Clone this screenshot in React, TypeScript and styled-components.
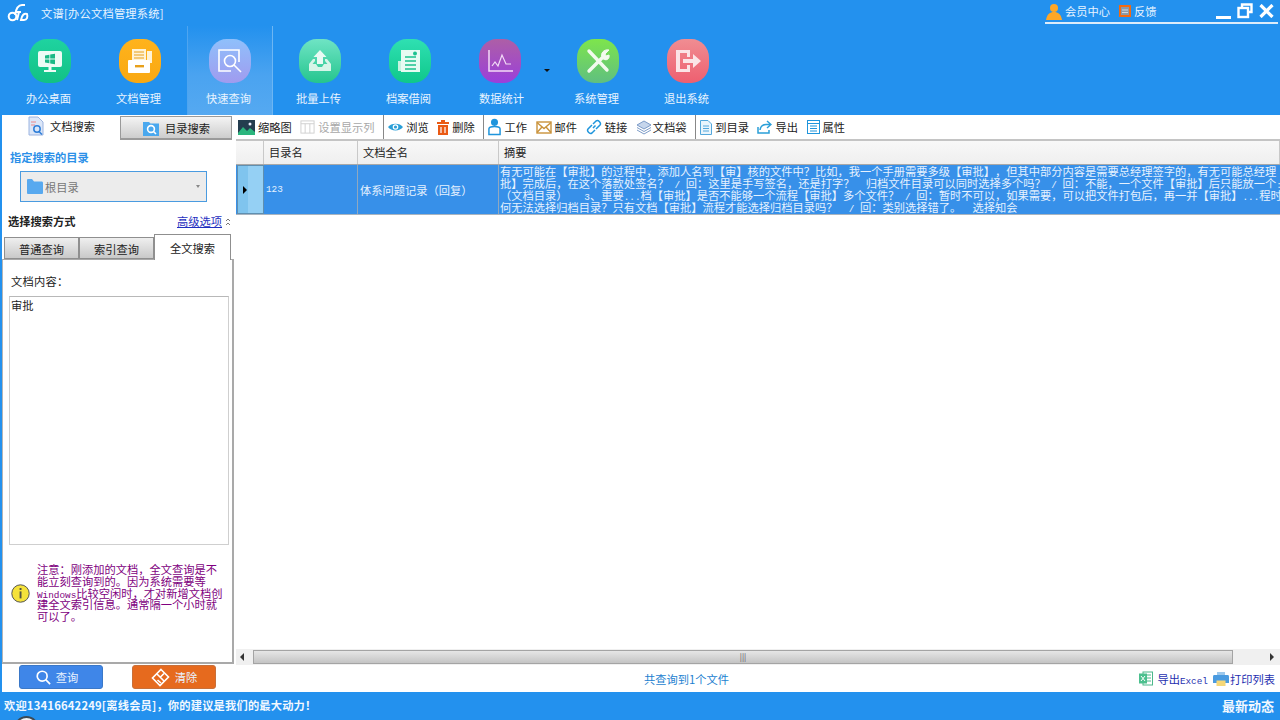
import React from "react";
import styled, { createGlobalStyle } from "styled-components";

const CJK = `"Noto Sans CJK SC", "Noto Sans", sans-serif`;
const MONO = `"Liberation Mono", "Noto Sans CJK SC", monospace`;
const BLUE = "#2391ee";

const GlobalStyle = createGlobalStyle`
  html, body { margin: 0; padding: 0; background: ${BLUE}; }
  * { box-sizing: border-box; text-spacing-trim: space-all; }
`;

const Page = styled.div`
  position: relative;
  width: 1280px;
  height: 720px;
  overflow: hidden;
  background: ${BLUE};
  font-family: ${CJK};
  font-size: 11.25px;
  color: #222;
  display: flex;
  flex-direction: column;
`;

// half-width runs, the .6em mono advance at this size is exactly half a CJK cell
const Half = styled.span`
  font-family: ${MONO};
  font-size: 9.375px;
  line-height: 0;
  white-space: pre;
`;

/* ---------- title bar ---------- */
const TitleBar = styled.div`
  height: 26px;
  flex: none;
  display: flex;
  align-items: flex-start;
  justify-content: space-between;
  padding-left: 7px;
`;

const Brand = styled.div`
  display: flex;
  align-items: center;
  gap: 12px;
  height: 26px;
  color: #e8f4ff;
  letter-spacing: 0.02em;
`;

const UserBox = styled.div`
  width: 233px;
  height: 24px;
  margin-right: 2px;
  border-bottom: 2px solid #dcecfa;
  display: flex;
  align-items: center;
  padding-left: 1px;
  color: #e8f4ff;
`;

const UserLink = styled.span`
  display: flex;
  align-items: center;
  gap: 3px;
  margin-right: 9px;
`;

const WindowButtons = styled.div`
  margin-left: auto;
  display: flex;
  align-items: center;
  gap: 6px;
  margin-right: 4px;
`;

/* ---------- ribbon ---------- */
const Ribbon = styled.div`
  height: 89px;
  flex: none;
  display: flex;
  padding-left: 5px;
`;

const RibbonItem = styled.div<{ $active?: boolean }>`
  width: ${(p) => (p.$active ? "86px" : "90px")};
  margin: ${(p) => (p.$active ? "0 2px" : "0")};
  display: flex;
  flex-direction: column;
  align-items: center;
  padding-top: 13px;
  color: #e9f4ff;
  font-size: 11.25px;
  background: ${(p) =>
    p.$active ? "linear-gradient(180deg, #2391ee 0%, #4aa3f0 55%, #55a9f1 100%)" : "transparent"};
  border-left: ${(p) => (p.$active ? "1px solid #4ea5f0" : "1px solid transparent")};
  border-right: ${(p) => (p.$active ? "1px solid #6db6f3" : "1px solid transparent")};
`;

const RibbonIcon = styled.div<{ $from: string; $to: string }>`
  width: 42px;
  height: 44px;
  border-radius: 42%;
  background: linear-gradient(180deg, ${(p) => p.$from}, ${(p) => p.$to});
  display: flex;
  align-items: center;
  justify-content: center;
`;

const RibbonLabel = styled.span<{ $nudge?: boolean }>`
  margin-top: 7px;
  padding: ${(p) => (p.$nudge ? "0 0 0 3px" : "0 3px 0 0")};
  line-height: 16px;
`;

const DropArrow = styled.div`
  width: 9px;
  flex: none;
  padding-top: 43px;
  margin-left: -1px;
  &::after {
    content: "";
    display: block;
    width: 0;
    height: 0;
    border-left: 3px solid transparent;
    border-right: 3px solid transparent;
    border-top: 3px solid #111;
  }
`;

/* ---------- main area ---------- */
const Main = styled.div`
  flex: 1;
  min-height: 0;
  display: flex;
  background: #fff;
`;

const LeftColumn = styled.div`
  width: 236px;
  flex: none;
  display: flex;
  flex-direction: column;
  border-left: 2px solid ${BLUE};
`;

const TopTabs = styled.div`
  height: 25px;
  flex: none;
  display: flex;
`;

const TopTab = styled.div<{ $active?: boolean }>`
  width: ${(p) => (p.$active ? "118px" : "112px")};
  height: ${(p) => (p.$active ? "25px" : "24px")};
  margin-top: ${(p) => (p.$active ? "0" : "1px")};
  display: flex;
  align-items: center;
  gap: 6px;
  padding-left: ${(p) => (p.$active ? "26px" : "22px")};
  padding-bottom: ${(p) => (p.$active ? "3px" : "0")};
  color: #1c1c1c;
  background: ${(p) => (p.$active ? "#fff" : "linear-gradient(180deg, #f4f4f4, #cdcdcd)")};
  border: ${(p) => (p.$active ? "none" : "1px solid #9a9a9a")};
  border-bottom-width: ${(p) => (p.$active ? "0" : "2px")};
`;

const LeftBody = styled.div`
  flex: 1;
  min-height: 0;
  display: flex;
  flex-direction: column;
  margin-right: 2px;
`;

const SectionTitle = styled.div`
  margin: 9px 0 0 8px;
  line-height: 16px;
  font-weight: 700;
  color: #2b90e8;
`;

const DirSelect = styled.div`
  width: 187px;
  height: 31px;
  margin: 6px 0 0 18px;
  border: 1px solid #4a9be0;
  background: #ececec;
  display: flex;
  align-items: center;
  padding: 0 6px;
  gap: 2px;
  color: #777;
`;

const SelectArrow = styled.span`
  margin-left: auto;
  width: 0;
  height: 0;
  border-left: 2.5px solid transparent;
  border-right: 2.5px solid transparent;
  border-top: 3px solid #888;
`;

const ModeRow = styled.div`
  display: flex;
  align-items: center;
  justify-content: space-between;
  margin: 11px 3px 0 6px;
  height: 16px;
`;

const ModeTitle = styled.span`
  font-weight: 700;
  color: #222;
`;

const AdvancedLink = styled.span`
  color: #1f2fc0;
  display: flex;
  align-items: center;
  gap: 3px;
`;

const AdvancedText = styled.span`
  text-decoration: underline;
`;

const InnerTabs = styled.div`
  height: 27px;
  margin-top: 3px;
  display: flex;
  align-items: flex-end;
  padding-left: 2px;
`;

const InnerTab = styled.div<{ $active?: boolean }>`
  width: ${(p) => (p.$active ? "77px" : "75px")};
  height: ${(p) => (p.$active ? "26px" : "22px")};
  margin-bottom: ${(p) => (p.$active ? "-1px" : "0")};
  padding-top: ${(p) => (p.$active ? "0" : "2px")};
  display: flex;
  align-items: center;
  justify-content: center;
  position: relative;
  z-index: ${(p) => (p.$active ? 1 : 0)};
  background: ${(p) => (p.$active ? "#fff" : "linear-gradient(180deg, #efefef, #c9c9c9)")};
  border: 1px solid #8f8f8f;
  border-bottom: ${(p) => (p.$active ? "none" : "1px solid #8f8f8f")};
`;

const TabPanel = styled.div`
  height: 405px;
  flex: none;
  border: 1px solid #a9a9a9;
  border-width: 1px 2px 2px 1px;
  border-left-color: #b5b5b5;
  display: flex;
  flex-direction: column;
  background: #fff;
`;

const FieldLabel = styled.div`
  margin: 13px 0 0 8px;
  line-height: 16px;
  letter-spacing: 0.02em;
`;

const ContentBox = styled.div`
  width: 220px;
  height: 249px;
  margin: 7px 0 0 6px;
  border: 1px solid #cfcfcf;
  border-top-color: #b8b8b8;
  padding: 1px 1px;
  line-height: 14px;
`;

const NoteRow = styled.div`
  display: flex;
  align-items: center;
  margin: 19px 0 0 8px;
  gap: 7px;
`;

const NoteText = styled.div`
  width: 186px;
  line-height: 11.8px;
  color: #800080;
`;

const ActionBar = styled.div`
  flex: 1;
  display: flex;
  gap: 29px;
  padding: 1px 0 0 17px;
`;

const ActionButton = styled.div<{ $orange?: boolean }>`
  width: 84px;
  height: 24px;
  border-radius: 3px;
  display: flex;
  align-items: center;
  justify-content: center;
  gap: 5px;
  padding-right: ${(p) => (p.$orange ? "0" : "8px")};
  color: #e8f2ff;
  background: ${(p) => (p.$orange ? "#e66a1e" : "#3f86e8")};
  border: 1px solid ${(p) => (p.$orange ? "#c8703a" : "#3a78c8")};
`;

/* ---------- right side ---------- */
const RightColumn = styled.div`
  flex: 1;
  min-width: 0;
  display: flex;
  flex-direction: column;
`;

const Toolbar = styled.div`
  height: 26px;
  flex: none;
  padding: 0 0 1px 2px;
  display: flex;
  align-items: center;
  border-bottom: 2px solid #c4c4c4;
  border-top: 1px solid #fff;
`;

const ToolItem = styled.div<{ $disabled?: boolean; $gap?: number }>`
  display: flex;
  align-items: center;
  gap: ${(p) => p.$gap ?? 3}px;
  margin-right: 8.6px;
  color: ${(p) => (p.$disabled ? "#a8a8a8" : "#222")};
  white-space: nowrap;
`;

const ToolSep = styled.span`
  width: 1px;
  height: 24px;
  margin: 0 4px 0 0;
  background: #888;
`;

const GridHeader = styled.div`
  height: 24px;
  flex: none;
  display: flex;
  background: linear-gradient(180deg, #f8f8f8, #efefef);
  border-bottom: 1px solid #a8a8a8;
`;

const HeadCell = styled.div<{ $w?: number }>`
  width: ${(p) => (p.$w ? `${p.$w}px` : "auto")};
  flex: ${(p) => (p.$w ? "none" : "1")};
  padding-left: 5px;
  line-height: 22px;
  border-right: 1px solid #c9c9c9;
  color: #222;
`;

const DataRow = styled.div`
  height: 50px;
  flex: none;
  display: flex;
  background: #3790e9;
  border-bottom: 1px solid #a8b4c0;
  color: #e6f2ff;
`;

const RowHandle = styled.div`
  width: 27px;
  margin-left: 1px;
  flex: none;
  display: flex;
  align-items: center;
  padding-left: 5px;
  background: linear-gradient(90deg, #7fc4ee 0 40%, #95d0f4 40% 100%);
  border: 1px solid #5f8fb0;
  &::before {
    content: "";
    width: 0;
    height: 0;
    border-top: 4px solid transparent;
    border-bottom: 4px solid transparent;
    border-left: 4px solid #000;
  }
`;

const RowCell = styled.div<{ $w: number }>`
  width: ${(p) => p.$w}px;
  flex: none;
  display: flex;
  align-items: center;
  padding-left: 2px;
  border-right: 1px solid #8fa8c0;
`;

const SummaryCell = styled.div`
  flex: 1;
  min-width: 0;
  overflow: hidden;
  padding: 1px 0 0 1px;
`;

const SummaryLine = styled.div`
  line-height: 11.9px;
  white-space: pre;
`;

const GridBody = styled.div`
  flex: 1;
  min-height: 0;
  background: #fff;
`;

const HScrollBar = styled.div`
  height: 16px;
  flex: none;
  display: flex;
  align-items: center;
  background: #f0f0f0;
  padding: 0 6px 0 4px;
`;

const ScrollArrow = styled.span<{ $right?: boolean }>`
  width: 0;
  height: 0;
  flex: none;
  border-top: 4px solid transparent;
  border-bottom: 4px solid transparent;
  ${(p) => (p.$right ? "border-left: 4px solid #333;" : "border-right: 4px solid #333;")}
`;

const ScrollThumb = styled.div`
  width: 980px;
  height: 14px;
  margin: 0 auto 0 9px;
  background: linear-gradient(180deg, #e6e6e6, #c4c4c4);
  border: 1px solid #a4a4a4;
  display: flex;
  align-items: center;
  justify-content: center;
  color: #555;
  font-size: 8px;
  line-height: 1;
`;

const FooterBar = styled.div`
  height: 27px;
  flex: none;
  display: flex;
  align-items: center;
  padding-right: 5px;
`;

const ResultCount = styled.span`
  margin-left: 408px;
  color: #1d7fd0;
`;

const FooterLinks = styled.div`
  margin-left: auto;
  display: flex;
  align-items: center;
  gap: 5px;
  color: #1f2fb0;
`;

const FooterLink = styled.span<{ $gap: number }>`
  display: flex;
  align-items: center;
  gap: ${(p) => p.$gap}px;
`;

/* ---------- status bar ---------- */
const StatusBar = styled.div`
  height: 28px;
  flex: none;
  display: flex;
  align-items: center;
  justify-content: space-between;
  padding: 0 6px 2px 4px;
  color: #f2f8ff;
  font-weight: 700;
`;

const WelcomeText = styled.span`
  letter-spacing: 0.18px;
`;

const NewsLink = styled.span`
  font-size: 13px;
`;

const BottomDial = styled.div`
  position: absolute;
  left: 14px;
  top: 716px;
  width: 25px;
  height: 25px;
  border-radius: 50%;
  background: #f4f4f4;
  border: 2px solid #3d4a55;
`;

/* ---------- drawings ---------- */
const LogoIcon = () => (
  <svg width="22" height="20" viewBox="0 0 22 20" fill="none" stroke="#fff">
    <circle cx="5.5" cy="13.5" r="3.8" strokeWidth="2" />
    <path d="M8 12 C9 6 11 2 15 2 L18 2 M9 9 L14 9 M12 9 L10 17 M14 17 C15 12 17 10 20 11 C21 14 20 17 17 17 Z" strokeWidth="2" />
  </svg>
);

const WhiteStroke = { fill: "none", stroke: "#fff", strokeWidth: 1.6 };

const DeskIcon = () => (
  <svg width="26" height="26" viewBox="0 0 26 26">
    <rect x="1" y="3" width="24" height="16" rx="2" fill="#eefbf5" />
    <rect x="11.5" y="19" width="3" height="3" fill="#eefbf5" />
    <rect x="7" y="22" width="12" height="2" fill="#eefbf5" />
    <path d="M8 7.5 L12.4 6.8 V10.6 H8Z M13.2 6.6 L18 5.8 V10.6 H13.2Z M8 11.4 H12.4 V15.2 L8 14.5Z M13.2 11.4 H18 V16.2 L13.2 15.4Z" fill="#1bb886" />
  </svg>
);

const FolderDocIcon = () => (
  <svg width="28" height="28" viewBox="0 0 28 28">
    <path d="M6 2 H20 V13 H6Z" fill="#fff3d6" />
    <path d="M8 5 H18 M8 8 H18 M8 11 H18" stroke="#e8a01a" strokeWidth="1.2" />
    <path d="M21 4 H26 V16 H21Z" fill="#fff3d6" />
    <rect x="2" y="13" width="22" height="13" rx="1" fill="#fff" />
    <rect x="9" y="18" width="9" height="2.4" fill="#e8a01a" />
  </svg>
);

const QueryIcon = () => (
  <svg width="26" height="26" viewBox="0 0 26 26" {...WhiteStroke}>
    <path d="M22 14 V2 H2 V23 H14" />
    <circle cx="13" cy="13" r="5.5" />
    <path d="M17 17 L24 24" />
  </svg>
);

const UploadIcon = () => (
  <svg width="26" height="26" viewBox="0 0 26 26">
    <path d="M13 2 L19.5 9 H16 V16 H10 V9 H6.5Z" fill="#eafaf4" />
    <path d="M2 16 L6 11 H8 V13 L5.5 16 H9 L11 19 H15 L17 16 H20.5 L18 13 V11 H20 L24 16 V23 H2Z" fill="#d6f5e8" />
  </svg>
);

const ArchiveIcon = () => (
  <svg width="26" height="26" viewBox="0 0 26 26">
    <rect x="4" y="2" width="19" height="22" fill="#e6fbf2" />
    <path d="M8 9 H19 M8 13 H19 M8 17 H19 M8 21 H19" stroke="#1cc28f" strokeWidth="1.6" />
    <circle cx="18" cy="5.5" r="2" fill="#1cc28f" />
    <path d="M1 13 H4 V23 H1Z" fill="#c6f3e0" />
  </svg>
);

const ChartIcon = () => (
  <svg width="28" height="26" viewBox="0 0 28 26" fill="none" stroke="#f3dcf7" strokeWidth="1.2">
    <path d="M3 2 V23 H27" strokeWidth="1.5" />
    <path d="M6 18 L9 14 L12 18 L16 7 L20 16 L25 16" />
  </svg>
);

const ToolsIcon = () => (
  <svg width="28" height="28" viewBox="0 0 28 28" fill="none" stroke="#f3faee" strokeLinecap="round">
    <path d="M5 4 L23 23" strokeWidth="3.4" />
    <path d="M5 24 L18 11" strokeWidth="3.4" />
    <path d="M18 11 C16 6 20 2 25 3 L21 7 L22 9 L25 8 C26 12 22 15 18 11Z" fill="#f3faee" strokeWidth="1" />
  </svg>
);

const ExitIcon = () => (
  <svg width="28" height="26" viewBox="0 0 28 26">
    <path d="M2 2 H16 V9 H13 V5 H6 V21 H13 V17 H16 V24 H2Z" fill="#fbe4e6" />
    <path d="M9 11 H19 V6 L27 13 L19 20 V15 H9Z" fill="#fbe4e6" />
  </svg>
);

const UserIcon = () => (
  <svg width="16" height="17" viewBox="0 0 16 17" fill="#ffa726">
    <circle cx="8" cy="5" r="4" />
    <path d="M0 17 C1 11 4 9 8 9 C12 9 15 11 16 17Z" />
  </svg>
);

const FeedbackIcon = () => (
  <svg width="12" height="12" viewBox="0 0 12 12">
    <rect x="1" y="1" width="10" height="10" fill="#8a9aa8" stroke="#f36a10" strokeWidth="2" />
    <path d="M3 5 H9 M3 7.5 H9" stroke="#d0d8e0" strokeWidth="1" />
  </svg>
);

const WindowIcons = () => (
  <WindowButtons>
    <svg width="15" height="18" viewBox="0 0 15 18"><rect y="14" width="15" height="3" fill="#fff" /></svg>
    <svg width="16" height="16" viewBox="0 0 16 16" fill="none" stroke="#fff" strokeWidth="2.4">
      <path d="M5 4 V1.5 H14.5 V9 H12" />
      <rect x="1.5" y="5" width="9.5" height="9" />
    </svg>
    <svg width="15" height="14" viewBox="0 0 15 14" stroke="#fff" strokeWidth="3.2"><path d="M1.5 1 L13.5 13 M13.5 1 L1.5 13" /></svg>
  </WindowButtons>
);

const DocSearchIcon = () => (
  <svg width="16" height="20" viewBox="0 0 16 20">
    <path d="M1 1 H10 L15 6 V19 H1Z" fill="#dbe6f8" stroke="#9cb4e0" />
    <path d="M3 6 H8 M3 9 H7" stroke="#e88" strokeWidth="1" />
    <circle cx="9" cy="13" r="3.2" fill="none" stroke="#2f7fd8" strokeWidth="1.5" />
    <path d="M11 15.5 L14 18.5" stroke="#2f7fd8" strokeWidth="1.5" />
  </svg>
);

const DirSearchIcon = () => (
  <svg width="16" height="16" viewBox="0 0 16 16">
    <path d="M0 2 H6 L7.5 3.5 H16 V16 H0Z" fill="#4aa8ee" />
    <circle cx="8" cy="9" r="3.4" fill="none" stroke="#fff" strokeWidth="1.6" />
    <path d="M10.5 11.5 L13 14" stroke="#fff" strokeWidth="1.6" />
  </svg>
);

const FolderIcon = () => (
  <svg width="16" height="17" viewBox="0 0 16 17"><path d="M0 2 Q0 1 1 1 H5 L7 3.5 H15 Q16 3.5 16 5 V15 Q16 16 15 16 H1 Q0 16 0 15Z" fill="#58a9ef" /></svg>
);

const DoubleChevron = () => (
  <svg width="6" height="9" viewBox="0 0 6 9" fill="none" stroke="#777"><path d="M1 4 L3 2 L5 4 M1 8 L3 6 L5 8" /></svg>
);

const InfoIcon = () => (
  <svg width="19" height="19" viewBox="0 0 19 19">
    <circle cx="9.5" cy="9.5" r="8.7" fill="#f5e23a" stroke="#555" strokeWidth="1" />
    <rect x="8.6" y="4" width="1.9" height="2" fill="#554" />
    <rect x="8.6" y="7.4" width="1.9" height="7" fill="#554" />
  </svg>
);

const SearchBtnIcon = () => (
  <svg width="15" height="15" viewBox="0 0 17 17" fill="none" stroke="#fff" strokeWidth="1.9">
    <circle cx="7" cy="7" r="5.6" />
    <path d="M11 11 L16 16" />
  </svg>
);

const BroomIcon = () => (
  <svg width="19" height="19" viewBox="0 0 19 19" fill="none" stroke="#fff" strokeWidth="1.6">
    <path d="M10 1.5 L17.5 9 L9 17.5 L1.5 10Z" />
    <path d="M6 6 L13 13 M9.5 9 L13 5.5 M6.5 12 L10 15" />
  </svg>
);

const ThumbIcon = () => (
  <svg width="17" height="15" viewBox="0 0 17 15">
    <rect width="17" height="15" fill="#243d4f" />
    <path d="M0 13 L5 7 L9 11 L12 8 L17 12 V15 H0Z" fill="#2bb57d" />
    <circle cx="12" cy="4" r="1.5" fill="#eef" />
  </svg>
);

const ColumnsIcon = () => (
  <svg width="15" height="16" viewBox="0 0 16 16" fill="none" stroke="#cfcfcf">
    <rect x="1" y="1.5" width="14" height="13" />
    <path d="M1 4.5 H15 M5.5 4.5 V14.5 M10.5 4.5 V14.5" />
  </svg>
);

const EyeIcon = () => (
  <svg width="15" height="10" viewBox="0 0 15 10">
    <path d="M0 5 C3 0.5 12 0.5 15 5 C12 9.5 3 9.5 0 5Z" fill="#2a9fd8" />
    <circle cx="7.5" cy="5" r="2.8" fill="#fff" />
    <circle cx="7.5" cy="5" r="1.6" fill="#2a9fd8" />
  </svg>
);

const TrashIcon = () => (
  <svg width="12" height="15" viewBox="0 0 12 15">
    <rect y="2" width="12" height="2" fill="#ea5a14" />
    <rect x="4" width="4" height="2" fill="#ea5a14" />
    <path d="M1 5 H11 V15 H1Z" fill="#ea5a14" />
    <path d="M4 7 V13 M8 7 V13" stroke="#fff" strokeWidth="1.2" />
  </svg>
);

const PersonIcon = () => (
  <svg width="13" height="18" viewBox="0 0 14 18" fill="none" stroke="#1f95dc" strokeWidth="1.6">
    <circle cx="7" cy="4" r="3" fill="#1f95dc" />
    <path d="M1 17 V11 C1 9 3 8.5 7 8.5 C11 8.5 13 9 13 11 V17Z" />
  </svg>
);

const MailIcon = () => (
  <svg width="16" height="13" viewBox="0 0 16 13" fill="none" stroke="#c9923a" strokeWidth="1.4">
    <rect x="1" y="1" width="14" height="11" />
    <path d="M1 1.5 L8 7.5 L15 1.5 M1 11.5 L6 6 M15 11.5 L10 6" />
  </svg>
);

const LinkIcon = () => (
  <svg width="16" height="16" viewBox="0 0 16 16" fill="none" stroke="#1f95dc" strokeWidth="1.5">
    <path d="M7 9 L9.5 6.5 M6 6 L2 10 C0.5 12 3.5 15.5 6 14 L9 11 M10 10 L14 6 C15.5 4 12.5 0.5 10 2 L7 5" />
  </svg>
);

const StackIcon = () => (
  <svg width="16" height="15" viewBox="0 0 16 15" stroke="#7d9cc8" strokeWidth="1">
    <path d="M1 10 L8 14 L15 10" fill="none" />
    <path d="M1 7.5 L8 11.5 L15 7.5" fill="none" />
    <path d="M8 1 L15 5 L8 9 L1 5Z" fill="#c6d6ec" />
  </svg>
);

const PageIcon = () => (
  <svg width="12" height="15" viewBox="0 0 12 15" fill="none" stroke="#54a8dc">
    <path d="M0.5 0.5 H8 L11.5 4 V14.5 H0.5Z" fill="#eaf5fc" />
    <path d="M3 6 H9 M3 8.5 H9 M3 11 H9" />
  </svg>
);

const ShareIcon = () => (
  <svg width="15" height="14" viewBox="0 0 15 14" fill="none" stroke="#2a9fd8" strokeWidth="1.5">
    <path d="M10 1 L14 4.5 L10 8 M14 4.5 H9 C5 4.5 3.5 7 3 10" />
    <path d="M1 7 V13 H12 V10" />
  </svg>
);

const TableIcon = () => (
  <svg width="13" height="14" viewBox="0 0 13 14" fill="#fff" stroke="#1f95dc">
    <rect x="0.5" y="0.5" width="12" height="13" />
    <path d="M0.5 3.5 H12.5 M3 6 H10 M3 8.5 H10 M3 11 H10" />
  </svg>
);

const ExcelIcon = () => (
  <svg width="14" height="15" viewBox="0 0 14 15">
    <rect x="4" y="1" width="9.5" height="13" fill="#fff" stroke="#4cb88a" />
    <path d="M8 4 H12 M8 7 H12 M8 10 H12" stroke="#4cb88a" />
    <rect x="0" y="2.5" width="8" height="10" fill="#4cc08e" />
    <path d="M2 5 L6 10 M6 5 L2 10" stroke="#fff" />
  </svg>
);

const PrinterIcon = () => (
  <svg width="16" height="14" viewBox="0 0 16 14">
    <rect x="4" y="0" width="8" height="4" fill="#9cc8ec" />
    <path d="M1 3 H15 Q16 3 16 4.5 V11 H0 V4.5 Q0 3 1 3Z" fill="#4a9be0" />
    <rect x="3.5" y="8.5" width="9" height="5.5" fill="#f6d878" />
  </svg>
);

/* ---------- data ---------- */
const ribbonItems = [
  { label: "办公桌面", from: "#1fd3a0", to: "#12c184", icon: <DeskIcon /> },
  { label: "文档管理", from: "#ffb31c", to: "#f9a812", icon: <FolderDocIcon /> },
  { label: "快速查询", from: "#8fc0fb", to: "#a09bef", icon: <QueryIcon />, active: true },
  { label: "批量上传", from: "#6fe4c4", to: "#25c58e", icon: <UploadIcon /> },
  { label: "档案借阅", from: "#2fe0b2", to: "#0fc78a", icon: <ArchiveIcon /> },
  { label: "数据统计", from: "#ad5fa6", to: "#9b3fdb", icon: <ChartIcon />, arrow: true },
  { label: "系统管理", from: "#7ee54c", to: "#5fbf80", icon: <ToolsIcon /> },
  { label: "退出系统", from: "#f08d92", to: "#ee5f70", icon: <ExitIcon /> },
];

type Tool = { label: string; icon: React.ReactNode; disabled?: boolean; gap?: number };

const toolGroups: Tool[][] = [
  [
    { label: "缩略图", icon: <ThumbIcon /> },
    { label: "设置显示列", icon: <ColumnsIcon />, disabled: true },
  ],
  [
    { label: "浏览", icon: <EyeIcon /> },
    { label: "删除", icon: <TrashIcon /> },
  ],
  [
    { label: "工作", icon: <PersonIcon /> },
    { label: "邮件", icon: <MailIcon /> },
    { label: "链接", icon: <LinkIcon /> },
    { label: "文档袋", icon: <StackIcon />, gap: 1 },
  ],
  [
    { label: "到目录", icon: <PageIcon /> },
    { label: "导出", icon: <ShareIcon /> },
    { label: "属性", icon: <TableIcon /> },
  ],
];

const summaryLines = [
  "有无可能在【审批】的过程中，添加人名到【审】核的文件中？比如，我一个手册需要多级【审批】，但其中部分内容是需要总经理签字的，有无可能总经理",
  "批】完成后，在这个落款处签名？ / 回：这里是手写签名，还是打字？  归档文件目录可以同时选择多个吗？ / 回：不能，一个文件【审批】后只能放一个:",
  "（文档目录）   3、重要...档【审批】是否不能够一个流程【审批】多个文件？ / 回：暂时不可以，如果需要，可以把文件打包后，再一并【审批】...程时",
  "何无法选择归档目录？只有文档【审批】流程才能选择归档目录吗？  / 回：类别选择错了。  选择知会",
];

// wraps the ascii runs of a line so they take half a cell each
const withHalfWidth = (line: string) =>
  line.split(/([\x20-\x7e]+)/).map((part, i) =>
    i % 2 === 1 ? <Half key={i}>{part}</Half> : part
  );

export default function App() {
  return (
    <Page>
      <GlobalStyle />
      <TitleBar>
        <Brand>
          <LogoIcon />
          <span>文谱[办公文档管理系统]</span>
        </Brand>
        <UserBox>
          <UserLink><UserIcon />会员中心</UserLink>
          <UserLink><FeedbackIcon />反馈</UserLink>
          <WindowIcons />
        </UserBox>
      </TitleBar>

      <Ribbon>
        {ribbonItems.map((item) => (
          <React.Fragment key={item.label}>
            <RibbonItem $active={item.active}>
              <RibbonIcon $from={item.from} $to={item.to}>{item.icon}</RibbonIcon>
              <RibbonLabel $nudge={item.arrow}>{item.label}</RibbonLabel>
            </RibbonItem>
            {item.arrow && <DropArrow />}
          </React.Fragment>
        ))}
      </Ribbon>

      <Main>
        <LeftColumn>
          <TopTabs>
            <TopTab $active><DocSearchIcon />文档搜索</TopTab>
            <TopTab><DirSearchIcon />目录搜索</TopTab>
          </TopTabs>
          <LeftBody>
            <SectionTitle>指定搜索的目录</SectionTitle>
            <DirSelect>
              <FolderIcon />
              <span>根目录</span>
              <SelectArrow />
            </DirSelect>
            <ModeRow>
              <ModeTitle>选择搜索方式</ModeTitle>
              <AdvancedLink><AdvancedText>高级选项</AdvancedText><DoubleChevron /></AdvancedLink>
            </ModeRow>
            <InnerTabs>
              <InnerTab>普通查询</InnerTab>
              <InnerTab>索引查询</InnerTab>
              <InnerTab $active>全文搜索</InnerTab>
            </InnerTabs>
            <TabPanel>
              <FieldLabel>文档内容：</FieldLabel>
              <ContentBox>审批</ContentBox>
              <NoteRow>
                <InfoIcon />
                <NoteText>
                  注意：刚添加的文档，全文查询是不能立刻查询到的。因为系统需要等<Half>Windows</Half>比较空闲时，才对新增文档创建全文索引信息。通常隔一个小时就可以了。
                </NoteText>
              </NoteRow>
            </TabPanel>
            <ActionBar>
              <ActionButton><SearchBtnIcon />查询</ActionButton>
              <ActionButton $orange><BroomIcon />清除</ActionButton>
            </ActionBar>
          </LeftBody>
        </LeftColumn>

        <RightColumn>
          <Toolbar>
            {toolGroups.map((group, i) => (
              <React.Fragment key={group[0].label}>
                {i > 0 && <ToolSep />}
                {group.map((tool) => (
                  <ToolItem key={tool.label} $disabled={tool.disabled} $gap={tool.gap}>
                    {tool.icon}
                    {tool.label}
                  </ToolItem>
                ))}
              </React.Fragment>
            ))}
          </Toolbar>
          <GridHeader>
            <HeadCell $w={28} />
            <HeadCell $w={94}>目录名</HeadCell>
            <HeadCell $w={141}>文档全名</HeadCell>
            <HeadCell>摘要</HeadCell>
          </GridHeader>
          <DataRow>
            <RowHandle />
            <RowCell $w={94}><Half>123</Half></RowCell>
            <RowCell $w={141}>体系问题记录（回复）</RowCell>
            <SummaryCell>
              {summaryLines.map((line) => (
                <SummaryLine key={line}>{withHalfWidth(line)}</SummaryLine>
              ))}
            </SummaryCell>
          </DataRow>
          <GridBody />
          <HScrollBar>
            <ScrollArrow />
            <ScrollThumb>|||</ScrollThumb>
            <ScrollArrow $right />
          </HScrollBar>
          <FooterBar>
            <ResultCount>共查询到1个文件</ResultCount>
            <FooterLinks>
              <FooterLink $gap={4}><ExcelIcon /><span>导出<Half>Excel</Half></span></FooterLink>
              <FooterLink $gap={1}><PrinterIcon />打印列表</FooterLink>
            </FooterLinks>
          </FooterBar>
        </RightColumn>
      </Main>

      <StatusBar>
        <WelcomeText>欢迎13416642249[离线会员]，你的建议是我们的最大动力！</WelcomeText>
        <NewsLink>最新动态</NewsLink>
      </StatusBar>
      <BottomDial />
    </Page>
  );
}
